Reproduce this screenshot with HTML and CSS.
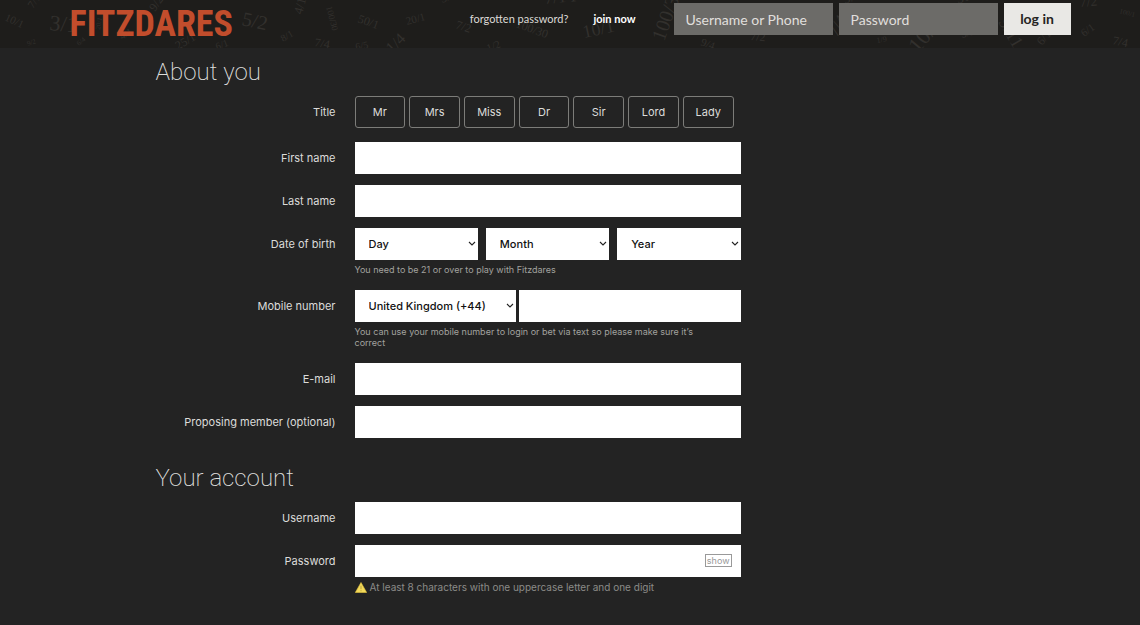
FILE: index.html
```html
<!DOCTYPE html>
<html lang="en">
<head>
<meta charset="utf-8">
<meta name="viewport" content="width=device-width, initial-scale=1">
<title>Join Fitzdares</title>
<link rel="stylesheet" href="styles.css">
</head>
<body>
<header class="site-header">
  <svg class="odds" aria-hidden="true">
    <g font-size="7">
      <text transform="translate(4 20) rotate(25)" font-size="11">10/1</text>
      <text transform="translate(33 9) rotate(-55)" font-size="11">7/1</text>
      <text transform="translate(49 30) rotate(5)" font-size="22">3/1</text>
      <text transform="translate(28 46) rotate(-20)">9/2</text>
      <text transform="translate(79 46) rotate(-40)">6/4</text>
      <text transform="translate(100 30) rotate(-80)">20/1</text>
      <text transform="translate(122 40) rotate(-30)" font-size="10">4/1</text>
      <text transform="translate(155 12) rotate(-55)" font-size="12">9/2</text>
      <text transform="translate(178 50) rotate(-30)" font-size="12">25/1</text>
      <text transform="translate(214 15) rotate(60)" font-size="10">8/1</text>
      <text transform="translate(217 50) rotate(-20)" font-size="10">6/1</text>
      <text transform="translate(241 25) rotate(12)" font-size="20">5/2</text>
      <text transform="translate(283 42) rotate(-30)" font-size="10">8/1</text>
      <text transform="translate(302 15) rotate(-75)" font-size="13">4/1</text>
      <text transform="translate(326 7) rotate(75)" font-size="9">100/30</text>
      <text transform="translate(314 46) rotate(10)" font-size="12">7/4</text>
      <text transform="translate(357 22) rotate(20)" font-size="12">50/1</text>
      <text transform="translate(356 50) rotate(-10)" font-size="10">6/5</text>
      <text transform="translate(392 54) rotate(-45)" font-size="16">1/4</text>
      <text transform="translate(407 25) rotate(-15)" font-size="11">20/1</text>
      <text transform="translate(455 28) rotate(18)" font-size="12">7/2</text>
      <text transform="translate(442 3) rotate(-20)" font-size="12">5/1</text>
      <text transform="translate(488 52) rotate(-20)" font-size="11">1/2</text>
      <text transform="translate(515 27) rotate(20)" font-size="12">100/30</text>
      <text transform="translate(545 4) rotate(-5)" font-size="17">7/1 F</text>
      <text transform="translate(584 38) rotate(-12)" font-size="18">10/1</text>
      <text transform="translate(664 42) rotate(-70)" font-size="20">100/30</text>
      <text transform="translate(700 45) rotate(20)" font-size="11">9/4</text>
      <text transform="translate(750 40) rotate(5)" font-size="12">7/2</text>
      <text transform="translate(837 38) rotate(-60)" font-size="17">7/4</text>
      <text transform="translate(845 4) rotate(-20)" font-size="14">9/4</text>
      <text transform="translate(877 43) rotate(-10)" font-size="8">1/9</text>
      <text transform="translate(918 54) rotate(-50)" font-size="22">10/1</text>
      <text transform="translate(958 4) rotate(-20)" font-size="14">50/1</text>
      <text transform="translate(962 38) rotate(-15)" font-size="11">5/2</text>
      <text transform="translate(998 22) rotate(60)" font-size="18">9/11</text>
      <text transform="translate(1042 46) rotate(-50)" font-size="12">6/1</text>
      <text transform="translate(1080 7) rotate(-5)" font-size="14">7/2</text>
      <text transform="translate(1119 13) rotate(15)" font-size="7">100/1</text>
      <text transform="translate(1084 37) rotate(-35)" font-size="11">6/1</text>
      <text transform="translate(1112 44) rotate(12)" font-size="12">7/4</text>
    </g>
  </svg>
  <div class="header-inner">
    <a class="logo" href="#">FITZDARES</a>
    <nav class="links">
      <a href="#">forgotten password?</a>
      <a class="join" href="#">join now</a>
    </nav>
    <form class="login">
      <input type="text" placeholder="Username or Phone" aria-label="Username or Phone">
      <input type="password" placeholder="Password" aria-label="Password">
      <button type="submit">log in</button>
    </form>
  </div>
</header>
<main class="page">
  <form class="join-form">
    <h2>About you</h2>
    <div class="row title-row" role="radiogroup" aria-labelledby="title-label">
      <span class="label" id="title-label">Title</span>
      <div class="titles">
        <label><input type="radio" name="title">Mr</label>
        <label><input type="radio" name="title">Mrs</label>
        <label><input type="radio" name="title">Miss</label>
        <label><input type="radio" name="title">Dr</label>
        <label><input type="radio" name="title">Sir</label>
        <label><input type="radio" name="title">Lord</label>
        <label><input type="radio" name="title">Lady</label>
      </div>
    </div>
    <div class="row">
      <label class="label" for="first">First name</label>
      <input class="field" id="first" type="text">
    </div>
    <div class="row">
      <label class="label" for="last">Last name</label>
      <input class="field" id="last" type="text">
    </div>
    <div class="row">
      <label class="label" for="day">Date of birth</label>
      <div>
        <div class="dob">
          <select class="field" id="day"><option>Day</option></select>
          <select class="field" aria-label="Month"><option>Month</option></select>
          <select class="field" aria-label="Year"><option>Year</option></select>
        </div>
        <p class="hint">You need to be 21 or over to play with Fitzdares</p>
      </div>
    </div>
    <div class="row">
      <label class="label" for="mobile">Mobile number</label>
      <div>
        <div class="mobile">
          <select class="field" aria-label="Country code"><option>United Kingdom (+44)</option></select>
          <input class="field" id="mobile" type="tel">
        </div>
        <p class="hint">You can use your mobile number to login or bet via text so please make sure it’s correct</p>
      </div>
    </div>
    <div class="row">
      <label class="label" for="email">E-mail</label>
      <input class="field" id="email" type="email">
    </div>
    <div class="row">
      <label class="label" for="member">Proposing member (optional)</label>
      <input class="field" id="member" type="text">
    </div>
    <h2 class="second">Your account</h2>
    <div class="row">
      <label class="label" for="user">Username</label>
      <input class="field" id="user" type="text">
    </div>
    <div class="row">
      <label class="label" for="pass">Password</label>
      <div>
        <div class="password">
          <input class="field" id="pass" type="password">
          <button class="show" type="button">show</button>
        </div>
        <p class="hint rule">
          <svg width="12" height="11" viewBox="0 0 12 11" aria-hidden="true"><path d="M6 .5 11.7 10.5H.3Z" fill="#f3d95a" stroke="#e2c33c" stroke-width=".6" stroke-linejoin="round"/><path d="M6 3.7V7.2M6 8.2v1.1" stroke="#b39b3c" stroke-width=".9"/></svg>
          At least 8 characters with one uppercase letter and one digit
        </p>
      </div>
    </div>
  </form>
</main>
</body>
</html>
```
FILE: styles.css
```css
* { box-sizing: border-box; }

body {
  margin: 0;
  min-height: 100vh;
  background: #232323;
  color: #dcdcda;
  font: 11px/16px Inter, "Liberation Sans", sans-serif;
}

input, select, button { font: inherit; border: 0; border-radius: 0; margin: 0; }

/* Header */
.site-header {
  position: relative;
  overflow: hidden;
  height: 48px;
  background: #1e1d1b;
  font-family: Lato, "Open Sans", sans-serif;
}

.odds {
  position: absolute;
  inset: 0;
  width: 100%;
  height: 100%;
  fill: #32302d;
  font-family: "Liberation Serif", serif;
}

.header-inner {
  position: relative;
  display: flex;
  align-items: flex-start;
  max-width: 1001px;
  margin: 0 auto;
  padding-top: 3px;
}

.logo {
  color: #c24d2c;
  font: bold 36px/42px "Roboto Condensed", "Open Sans Condensed", Roboto, sans-serif;
  text-decoration: none;
}

.links {
  display: flex;
  gap: 25px;
  margin-left: auto;
  margin-right: 38px;
  line-height: 32px;
  white-space: nowrap;
}

.links a { color: #dcdad6; text-decoration: none; }
.links .join { color: #fff; font-weight: 700; }

.login { display: flex; gap: 6px; }

.login input {
  width: 159px;
  height: 32px;
  padding: 0 12px;
  background: #6c6b68;
  color: #e6e5e2;
  font-size: 14px;
}

.login input::placeholder { color: #e0dfdc; opacity: 1; }

.login button {
  width: 67px;
  height: 32px;
  padding: 0;
  background: #e9e8e5;
  color: #252422;
  font-size: 14px;
  font-weight: 700;
}

/* Registration form */
.page { max-width: 1001px; margin: 0 auto; padding: 8px 0 24px 86px; }

h2 {
  margin: 0 0 8px;
  color: #dededc;
  font-family: Roboto, Inter, sans-serif;
  font-size: 24px;
  line-height: 32px;
  font-weight: 200;
}

h2.second { margin-top: 24px; }

.row {
  display: grid;
  grid-template-columns: 180px minmax(0, 386px);
  column-gap: 19px;
  margin-bottom: 11px;
}

.title-row { margin-bottom: 14px; }

.label { text-align: right; line-height: 32px; }

.titles { display: flex; gap: 4px; padding-right: 7px; }

.titles label {
  flex: 1;
  height: 32px;
  border: 1px solid #7c7c79;
  border-radius: 3px;
  line-height: 30px;
  text-align: center;
  cursor: pointer;
}

.titles input { position: absolute; opacity: 0; pointer-events: none; }
.titles label:has(:checked) { background: #55554f; }

.field {
  width: 100%;
  height: 32px;
  padding: 0 14px;
  background: #fff;
  color: #111;
}

select.field {
  appearance: none;
  font-weight: 500;
  background: #fff url("data:image/svg+xml,%3Csvg xmlns='http://www.w3.org/2000/svg' width='8' height='6'%3E%3Cpath d='M1 1l3 3 3-3' fill='none' stroke='%23222' stroke-width='1.1'/%3E%3C/svg%3E") no-repeat right 2px center;
}

.dob { display: grid; grid-template-columns: repeat(3, 1fr); gap: 8px; }
.mobile { display: grid; grid-template-columns: 161px 1fr; gap: 3px; }

.hint {
  margin: 0;
  padding: 4px 20px 4px 0;
  color: #a2a29f;
  font-size: 9px;
  line-height: 11px;
}

.rule {
  display: flex;
  align-items: center;
  gap: 3px;
  padding-top: 5px;
  color: #8b8b88;
  font-size: 10px;
}

.password { position: relative; }

.show {
  position: absolute;
  right: 9px;
  top: 9px;
  height: 13px;
  padding: 0 1px;
  border: 1px solid #999;
  background: #fff;
  color: #999;
  font-size: 9px;
  line-height: 11px;
}
```
